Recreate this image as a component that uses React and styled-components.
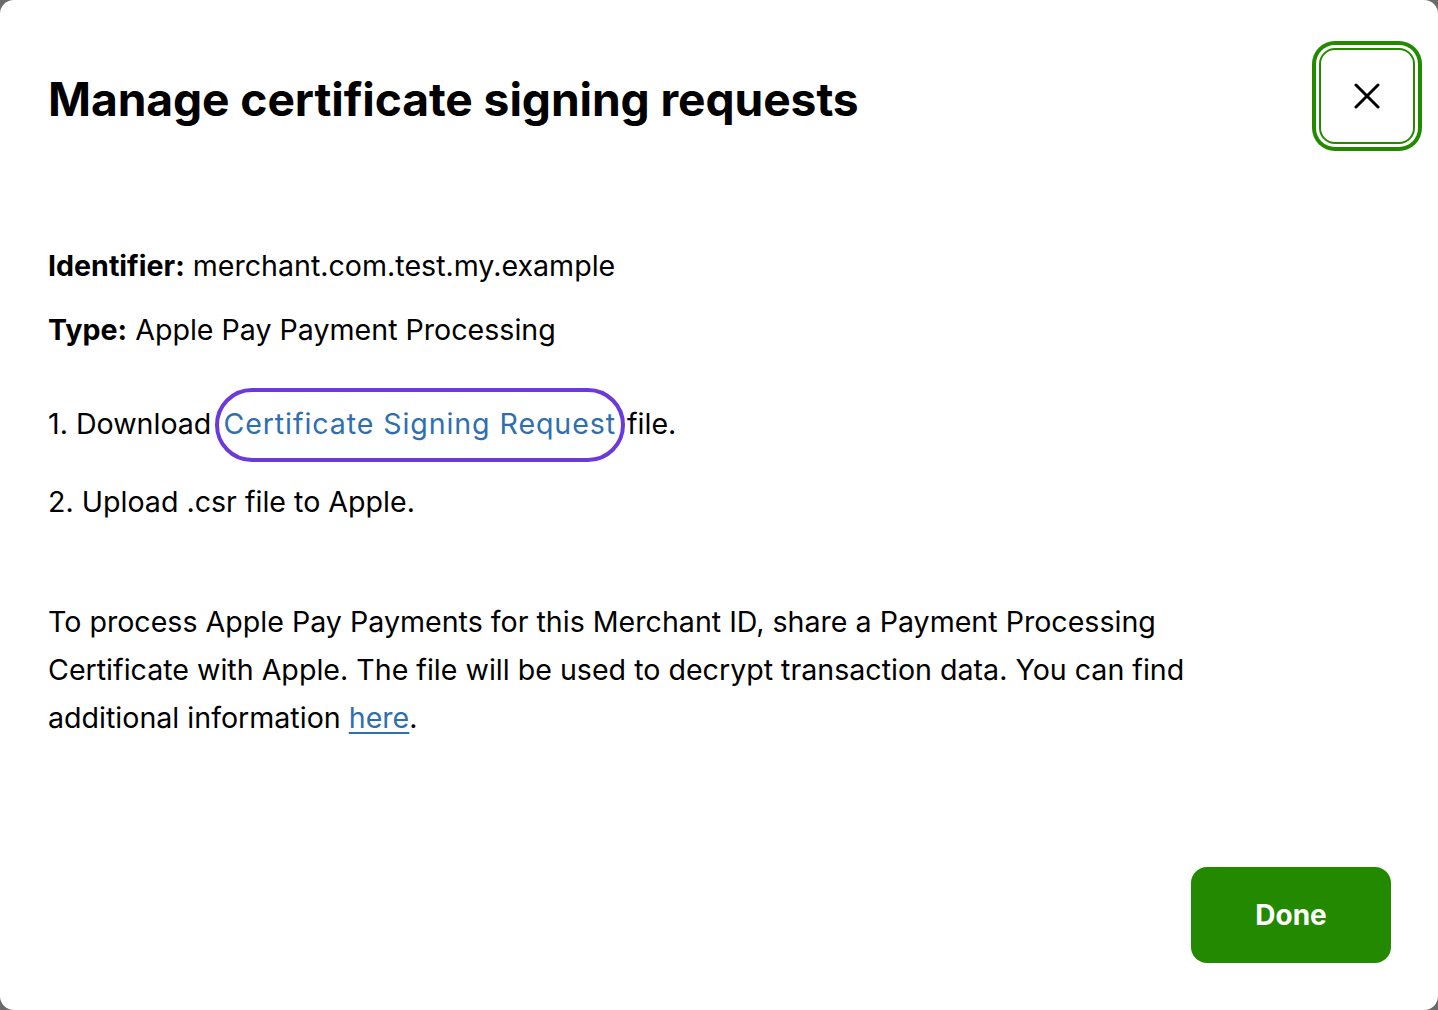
import React from 'react'
import styled, { createGlobalStyle } from 'styled-components'

const GlobalStyle = createGlobalStyle`
  html, body {
    margin: 0;
    padding: 0;
    background: #6b6b6b;
  }
  body {
    font-family: 'Inter', 'Liberation Sans', sans-serif;
    color: #000;
  }
`

const Modal = styled.div`
  width: 1438px;
  height: 1010px;
  box-sizing: border-box;
  background: #fff;
  border-radius: 14px;
  display: flex;
  flex-direction: column;
  padding: 48px 47px 47px 48px;
`

const Header = styled.header`
  display: flex;
  justify-content: space-between;
  align-items: flex-start;
`

const Title = styled.h1`
  margin: 24px 0 0;
  font-size: 46.2px;
  font-weight: 700;
  letter-spacing: -0.1px;
  line-height: 54px;
`

const CloseButton = styled.button`
  width: 96px;
  height: 96px;
  margin-right: -24px;
  border: 2px solid #238a00;
  border-radius: 16px;
  background: #fff;
  box-shadow: 0 0 0 3px #fff, 0 0 0 7px #238a00;
  display: flex;
  align-items: center;
  justify-content: center;
  cursor: pointer;
  padding: 0;
`

const Body = styled.div`
  flex: 1;
  padding-top: 102px;
  font-size: 28.6px;
`

const Line = styled.p`
  margin: 0 0 ${p => p.$gap || 0}px;
  line-height: 40px;
`

const Label = styled.strong`
  font-weight: 700;
`

const FocusLink = styled.a`
  color: #2f6fb0;
  text-decoration: none;
  display: inline-block;
  padding: 12px 5px 14px 4px;
  margin: -18px 2px -18px 4px;
  border: 4px solid #6a3bd8;
  border-radius: 40px;
  line-height: 40px;
  letter-spacing: 0.9px;
`

const Paragraph = styled.p`
  margin: 0;
  line-height: 48px;
  max-width: 1210px;
`

const TextLink = styled.a`
  color: #2f6fb0;
  text-decoration: underline;
  text-underline-offset: 4px;
  text-decoration-thickness: 2px;
`

const Footer = styled.footer`
  display: flex;
  justify-content: flex-end;
`

const DoneButton = styled.button`
  width: 200px;
  height: 96px;
  border: none;
  border-radius: 16px;
  background: #238a00;
  color: #fff;
  font-family: inherit;
  font-size: 28px;
  font-weight: 700;
  cursor: pointer;
`

const CloseIcon = () => (
  <svg width="26" height="26" viewBox="0 0 26 26" fill="none">
    <path d="M2 2L24 24M24 2L2 24" stroke="#000" strokeWidth="3" strokeLinecap="round" />
  </svg>
)

const App = () => (
  <>
    <GlobalStyle />
    <Modal>
      <Header>
        <Title>Manage certificate signing requests</Title>
        <CloseButton aria-label="Close">
          <CloseIcon />
        </CloseButton>
      </Header>
      <Body>
        <Line $gap={24}><Label>Identifier:</Label> merchant.com.test.my.example</Line>
        <Line $gap={54}><Label>Type:</Label> Apple Pay Payment Processing</Line>
        <Line $gap={38}>1. Download<FocusLink href="#">Certificate Signing Request</FocusLink>file.</Line>
        <Line $gap={76}>2. Upload .csr file to Apple.</Line>
        <Paragraph>
          To process Apple Pay Payments for this Merchant ID, share a Payment Processing
          Certificate with Apple. The file will be used to decrypt transaction data. You can find
          additional information <TextLink href="#">here</TextLink>.
        </Paragraph>
      </Body>
      <Footer>
        <DoneButton>Done</DoneButton>
      </Footer>
    </Modal>
  </>
)

export default App
